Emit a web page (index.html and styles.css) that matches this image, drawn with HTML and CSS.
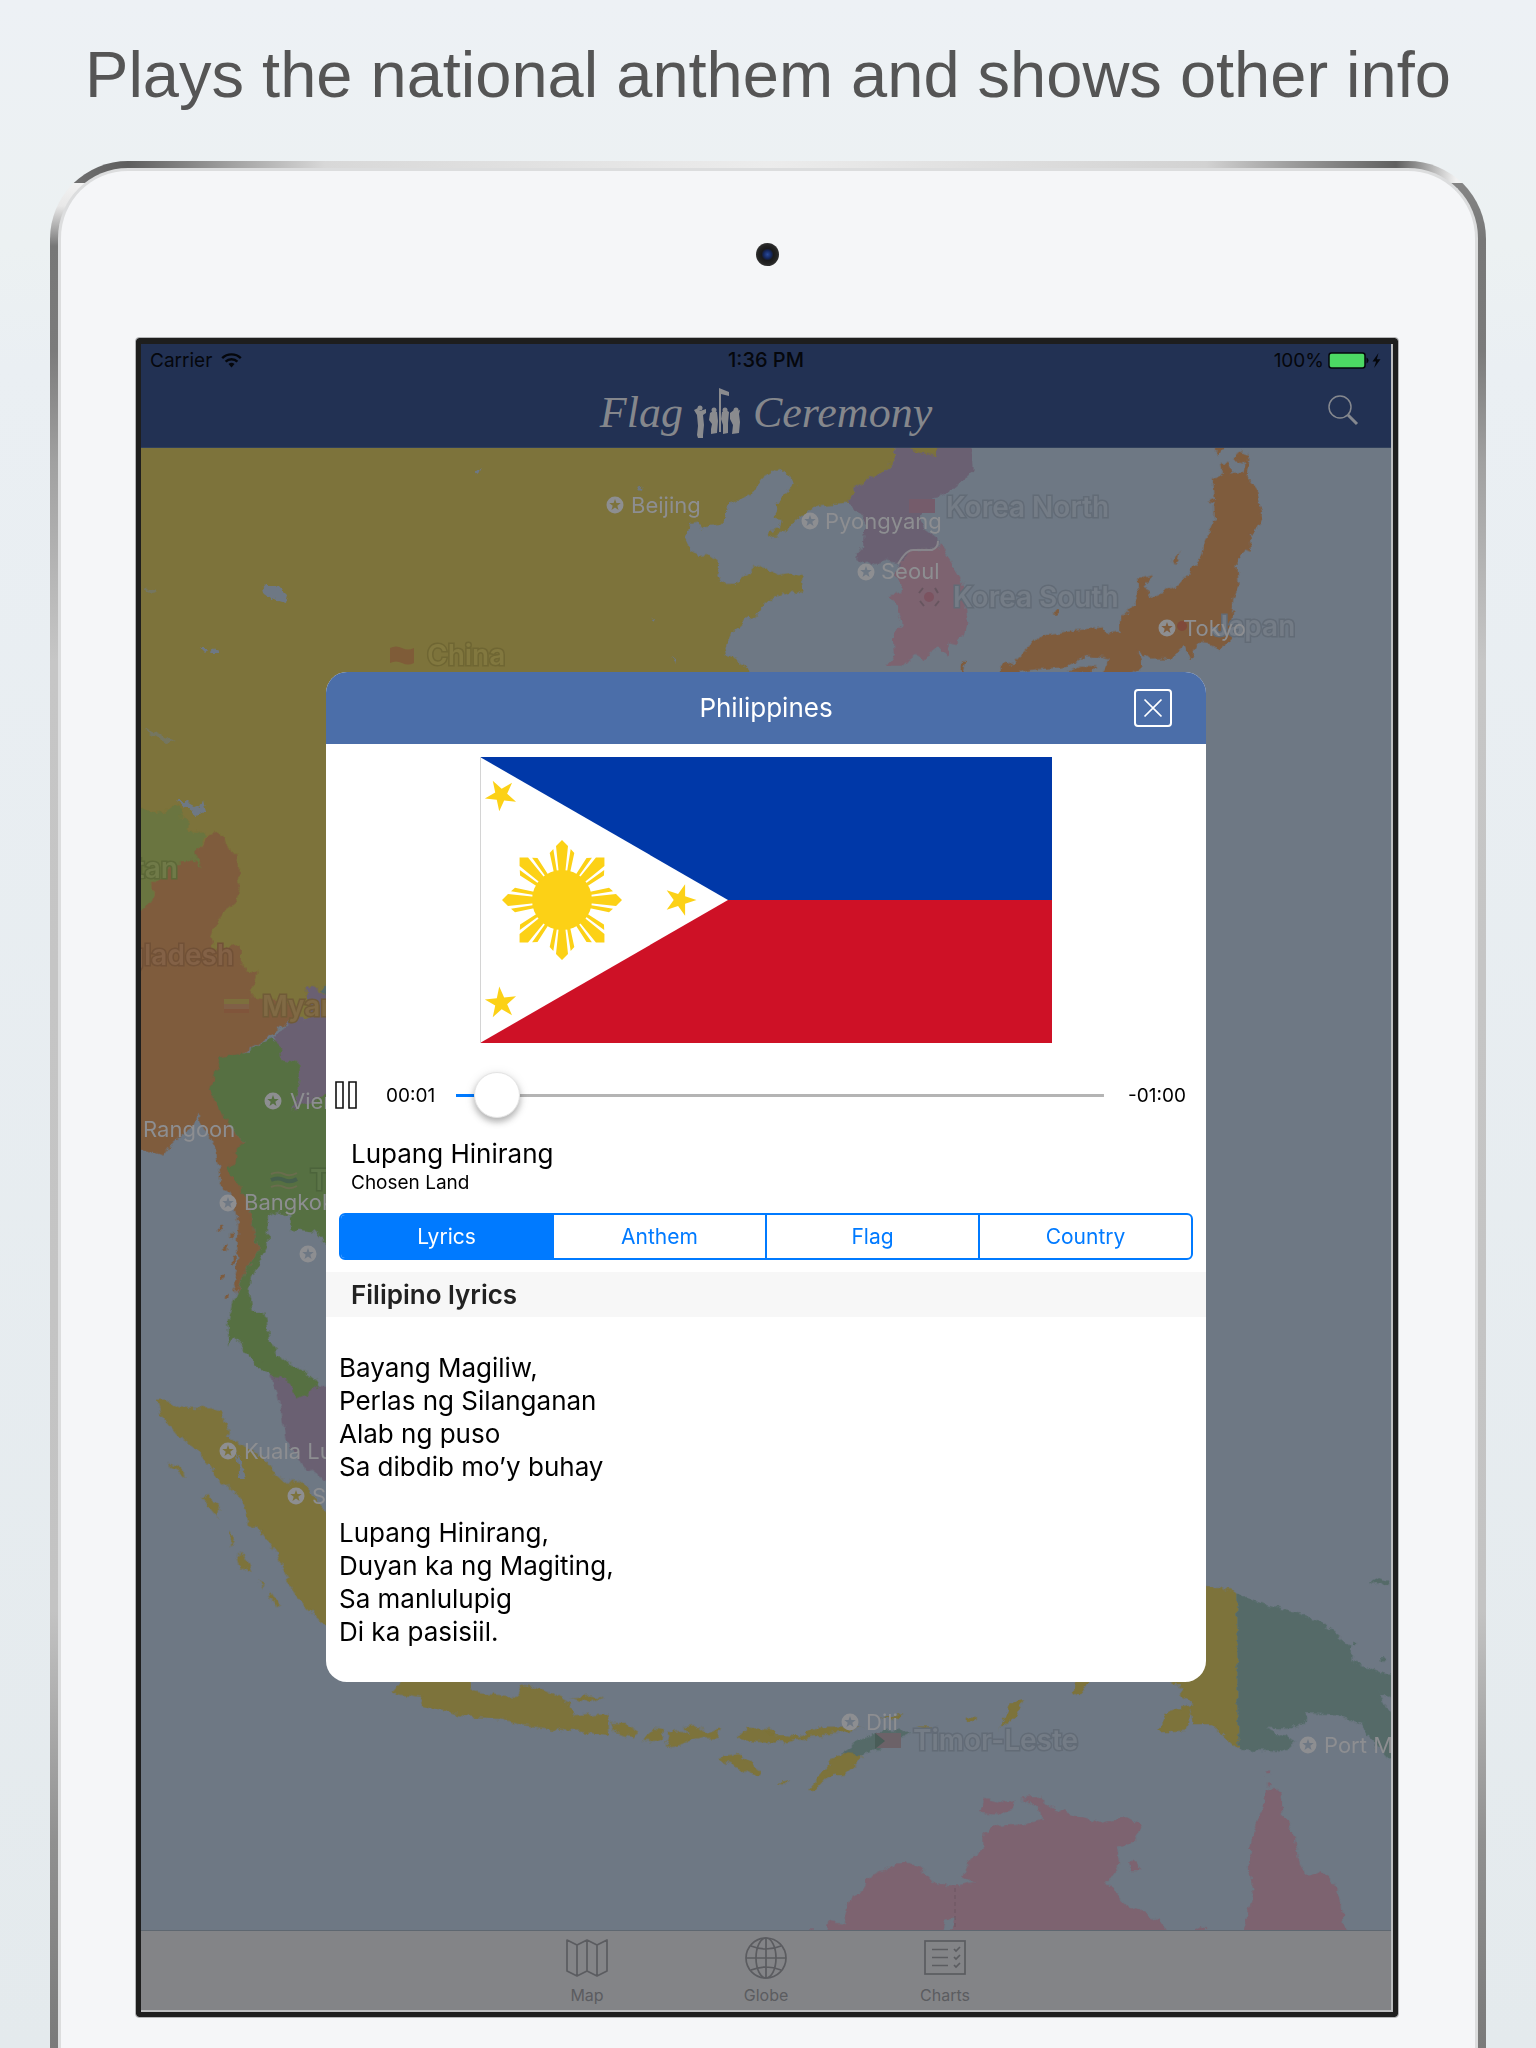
FILE: index.html
```html
<!DOCTYPE html>
<html lang="en">
<head>
<meta charset="utf-8">
<title>Flag Ceremony</title>
<meta name="viewport" content="width=device-width, initial-scale=1">
<link rel="stylesheet" href="styles.css">
</head>
<body>
<h1 class="headline">Plays the national anthem and shows other info</h1>
<div class="device">
  <div class="bezel">
    <div class="camera"></div>
    <div class="screen">
      <header class="topbar">
        <div class="status">
          <div class="status-left">
            <span>Carrier</span>
            <svg width="21" height="15" viewBox="0 0 21 15" aria-hidden="true"><g fill="none" stroke="#05070c" stroke-width="2.4"><path d="M1.2 5.2a13.2 13.2 0 0 1 18.6 0"/><path d="M4.6 8.6a8.4 8.4 0 0 1 11.8 0"/></g><path d="M10.500 14.500l-3-3.400a4.300 4.300 0 0 1 6 0z" fill="#05070c"/></svg>
          </div>
          <time class="clock">1:36 PM</time>
          <div class="status-right">
            <span>100%</span>
            <svg width="54" height="17" viewBox="0 0 54 17" aria-hidden="true"><rect x="1" y="1" width="36" height="15" rx="2.500" fill="#4cd964" stroke="#05070c" stroke-width="1.500"/><path d="M38.500 5.500q2 .8 2 3t-2 3z" fill="#05070c"/><path d="M50.500 1l-6 8.500h3.600l-2 6.500 6.400-8.700h-3.700z" fill="#05070c"/></svg>
          </div>
        </div>
        <div class="navrow">
          <div class="brand">
            <span>Flag</span>
            <svg width="50" height="52" viewBox="0 0 50 52" aria-hidden="true"><g fill="#8a8b8e"><path d="M26 1l10 4v4l-8-2v38h-2z"/><path d="M1 23l4-2 2 3 6-2v4l-3 2 1 10-1 10v3H5l-1-3 1-9-1-11z"/><circle cx="7" cy="21" r="2.500"/><path d="M17 26l3-2 4 1 1 9-1 12-6 1v-5l1-5-3-4z"/><circle cx="21" cy="23" r="2.500"/><path d="M29 25l4-2 3 2-1 11v10l-5 1v-9l-2-6z"/><circle cx="32" cy="23" r="2.500"/><path d="M37 26l4-3 3 1 3-1-1 4 1 8-1 11-7 1 1-9-3-6z"/><circle cx="43" cy="23" r="2.500"/></g></svg>
            <span>Ceremony</span>
          </div>
          <button class="search" type="button" aria-label="Search">
            <svg width="32" height="32" viewBox="0 0 32 32" aria-hidden="true"><circle cx="13" cy="13" r="11" fill="none" stroke="#85888f" stroke-width="1.500"/><path d="M21 21l9 9" stroke="#85888f" stroke-width="3"/></svg>
          </button>
        </div>
      </header>

      <main class="stage">
        <svg class="map" viewBox="141 448 1250 1482" preserveAspectRatio="xMidYMid slice" role="img" aria-label="Map of East and Southeast Asia">
          <defs>
            <filter id="coast" x="0" y="0" width="1" height="1"><feTurbulence type="fractalNoise" baseFrequency=".11" numOctaves="3" seed="4"/><feDisplacementMap in="SourceGraphic" scale="9" xChannelSelector="R" yChannelSelector="G"/></filter>
            <path id="capital" fill-rule="evenodd" d="M0-8.500a8.500 8.500 0 1 1 0 17a8.500 8.500 0 1 1 0-17zM0-6l-1.400 4.100h-4.300l3.400 2.600-1.200 4.200 3.500-2.500 3.500 2.500-1.200-4.200 3.400-2.600h-4.300z"/>
          </defs>
          <g filter="url(#coast)">
            <!-- China -->
            <path fill="#7d733a" d="M100 400H674V1019H100z"/>
            <g transform="translate(670 440) scale(.3333)">
              <path fill="#7d733a" d="M0-100H683V24L672 60 645 92 600 118 560 140 525 188 490 192 450 195 415 215 375 240 350 270 320 285 296 292 300 275 330 268 335 240 310 235 322 212 320 190 345 165 378 130 345 90 320 95 305 92 285 105 262 130 250 158 215 175 180 190 165 215 160 240 145 255 110 258 98 268 85 250 62 255 42 295 58 330 85 348 120 345 142 360 150 380 142 410 155 435 200 435 208 412 235 400 250 382 275 375 300 390 325 408 360 402 402 412 392 430 398 450 375 465 360 455 320 472 280 490 265 528 240 540 230 520 222 545 190 575 180 605 160 620 165 645 200 660 230 680 240 697V800H0z"/>
              <path fill="#6b6072" d="M683-60H905V24L908 95 865 130 830 160 790 175 755 200 750 230 760 260 806 298 800 325 720 332 690 375 650 360 600 375 552 350 580 320 580 290 590 250 570 218 545 205 525 188 560 140 600 118 645 92 672 60 683 24z"/>
              <path fill="#7d733a" d="M720-60H803V24L797 47 770 42 740 36 720 24z"/>
              <path fill="#7d6370" d="M690 375L718 332 800 328 808 305 830 350 850 380 880 430 885 500 893 540 880 590 860 615 835 610 830 640 800 625 760 655 740 645 700 680 650 680 675 640 672 600 695 550 680 500 655 465 700 455 690 430 680 400z"/>
            </g>
            <!-- Japan -->
            <g transform="translate(770 330) scale(.40816 .3333)">
              <path fill="#7f5c3e" d="M1088 320H1112V355L1100 378 1088 360zM1105 395L1125 400 1130 430 1160 425 1165 395 1135 390 1145 368 1175 378 1170 440 1195 480 1208 550 1190 605 1175 620 1178 662 1160 655 1145 690 1148 770 1135 810 1130 880 1140 910 1100 960 1085 940 1050 935 1030 990 1015 950 985 985 925 985 900 960 910 1010 880 1040H810L830 985 780 975 730 1010 640 1020 565 1040 562 1008 600 995 665 915 760 900 815 892 825 910 860 905 860 860 905 800 900 750 935 738 915 765 935 800 1000 765 1055 690 1065 640 1090 570 1088 520 1072 515 1090 505 1085 450 1110 430zM985 690L1003 662 998 688 1006 686 992 708zM465 1030L472 990 482 985 474 1030zM694 846h12v8h-12zM730 1025L760 1010 800 1012 790 1030z"/>
            </g>
            <!-- Mainland Southeast Asia -->
            <g transform="translate(130 680) scale(.3333 .44643)">
              <path fill="#6a7540" d="M-40 285H33L60 300 95 298 135 275 160 292 155 312 175 318 170 335 205 338 228 352 200 390 215 418 190 405 130 412 70 455 70 490 40 520 33 560H-40z"/>
              <path fill="#7f5c3e" d="M-40 530L45 510 72 485 70 455 130 412 190 403 215 418 198 390 228 360 248 333 285 355 300 390 325 390 328 470 318 495 285 515 258 545 245 575 250 605 335 592 335 630 345 650 383 655 362 708 430 715 495 730 505 745 430 790 350 830 300 860 300 1000 340 1035 330 1080 315 1110 355 1165 370 1235 390 1280 350 1320 318 1375 312 1350 320 1320 325 1220 310 1170 270 1120 262 1080 250 1040 200 970 190 1000 130 1035 100 1065 60 1055 30 1050H-40z"/>
              <path fill="#6b6072" d="M530 690L550 690 588 705H640V950H588L500 965 490 955 508 900 505 855 455 850 430 800 470 770 505 745 520 760 545 755 530 720z"/>
              <path fill="#54696b" d="M570 692L600 676V712L588 705z"/>
              <path fill="#577043" d="M270 845L350 835 385 815 420 803 445 815 455 850 505 855 508 900 488 960 588 930H640V1265H588L550 1235 485 1230 480 1200 450 1190 420 1200 415 1260 365 1340 358 1375 365 1415 405 1415 420 1480 450 1520 520 1545 560 1568 620 1640 560 1640 490 1620 430 1560 370 1530 345 1500 310 1470 298 1490 292 1440 305 1400 350 1320 390 1280 370 1235 355 1165 290 1095 318 1080 320 1050 340 1035 300 1000 260 950 240 915 255 890z"/>
              <path fill="#7f5c3e" d="M270 1220h12v12h-12zM295 1240h14v10h-14zM280 1265h12v14h-12zM302 1290h12v16h-12zM272 1330h12v10h-12zM285 1375h14v8h-14z"/>
            </g>
            <!-- Sumatra, Java and the Malay Peninsula -->
            <g transform="translate(130 1360) scale(.40816 .43879)">
              <path fill="#577043" d="M315-10L345 35 380 45 400 60 408 88 440 75 465 60 430 30 385 10 370-10z"/>
              <path fill="#6b6072" d="M345 35L380 45 400 60 408 88 440 75 465 60 520 70V290L480 275 430 245 385 190 375 140 362 80z"/>
              <path fill="#7d733a" d="M65 90L85 90 120 108 200 110 225 120 242 160 235 175 290 200 340 235 355 260 385 285 400 270 440 290 440 300 480 345H540V640L480 605 430 565 390 510 360 440 320 390 292 375 270 310 210 265 175 210 130 185 80 130zM95 235L135 256 135 264 100 245zM175 315L195 310 218 340 215 360zM247 390L257 408 248 425zM262 445L280 442 298 485 270 475zM315 500L330 510 326 520zM340 530L350 532 368 560 360 566zM640 760L680 720H830L840 758 950 768 962 740 985 745 1040 762 1075 780 1085 812 1170 805 1175 855 1080 845 960 832 900 818 830 812 770 800 710 788 715 770zM1080 770L1130 765 1158 770 1120 780zM1178 830L1215 830 1248 848 1230 860 1190 850zM1260 870L1280 838 1308 842 1300 870zM1310 880L1318 848 1355 845 1375 855 1355 835 1385 832 1410 850 1445 840 1440 862 1400 862 1330 882zM1490 860L1510 840 1580 845V872L1520 866zM1438 908L1490 898 1545 935 1530 948 1500 935z"/>
            </g>
            <!-- Timor, New Guinea and Australia -->
            <g transform="translate(770 1360) scale(.48852 .43879)">
              <path fill="#7d733a" d="M-10 852L60 858 100 838 190 838 150 850 100 855 30 872-10 868zM78 980L105 945 130 905 185 880 185 910 150 945 115 950 90 980zM225 815L270 805 265 818zM300 835L340 835 320 842zM405 815h14v10h-14zM470 838L490 785 520 775 505 810zM622 755L630 720H660L635 762zM795 846L815 800 855 790 862 805 850 845zM15 965L40 958 30 968zM860 515H891L920 518 957 532V885L905 830 865 830 862 800 845 790 870 785 840 765 850 750 820 734V515z"/>
              <path fill="#546b68" d="M145 895L190 860 240 845 295 845 260 865 190 900zM957 532L1020 560 1085 578 1130 600 1165 630 1190 655 1188 685 1250 712 1320 730V935L1270 912 1230 865 1210 830 1160 808 1100 805 1090 830 1060 840 1015 838 1075 870 1060 885 1035 893 957 885zM1228 505L1245 495 1267 501 1262 512 1240 514zM1192 638h10v12h-10zM1250 675h10v10h-10z"/>
              <path fill="#6e7884" d="M1246 758L1320 790V830L1262 795z"/>
              <path fill="#7d6370" d="M75 1300L115 1300 120 1280 150 1285 165 1220 190 1210 200 1180 240 1160 275 1142 310 1160 340 1195 380 1200 420 1192 395 1175 415 1130 435 1110 435 1085 460 1060 530 1055 555 1045 550 1020 515 1000 550 995 575 1020 620 1035 680 1055 730 1042 762 1060 740 1100 710 1110 715 1150 688 1195 730 1240 770 1260 818 1300 850 1330H75zM430 1030L440 1000 480 1010 500 1005 495 1025 470 1035zM735 1145L750 1142 762 1165 738 1165zM870 1300L885 1290 895 1296 890 1330zM970 1300L990 1210 982 1150 990 1070 1010 1020 1015 985 1030 975 1045 990 1050 1040 1075 1090 1085 1150 1100 1180 1130 1165 1160 1200 1178 1300V1340H965zM1012 938h10v8h-10zM1015 965h8v8h-8z"/>
              <path fill="#6e7884" d="M355 1300L360 1275 378 1268 372 1300z"/>
            </g>
            <!-- Lakes -->
            <path fill="#6e7884" d="M261 592L268 584 276 584 287 595 285 603 271 599zM475 472L481 467 478 474zM200 648L209 648 205 653zM212 653L216 646 220 653zM636 489L643 487 638 491zM650 619L654 618 652 622zM673 656L678 660 677 664zM177 800L186 800 200 808 203 799 206 811 196 814zM235 1450L246 1478 240 1478z"/>
            <path fill="#747661" d="M142 589L151 588 158 592 152 593zM144 729L160 735 176 741 166 743 150 734z"/>
          </g>
          <path d="M898 564Q906 550 913 550H932Q938 548 938 541" fill="none" stroke="#87858b" stroke-width="2"/>
          <path d="M955 1888V1930" stroke="#6d5661" stroke-dasharray="4 3"/>
          <g class="map-flags">
            <path fill="#7f5c38" d="M390 648q6-3 12 0t12 0v15q-6 3-12 0t-12 0z"/>
            <path fill="#755c6b" d="M909 499h26v14h-26z"/>
            <circle cx="929" cy="597" r="5" fill="#7c5360"/>
            <path d="M919 593l4-5M920 601l4 5M935 588l3 5M935 606l4-5" stroke="#67555f" stroke-width="2"/>
            <circle cx="1182" cy="626" r="5" fill="#80493a"/>
            <path fill="#7d6f3d" d="M224 999h25v5h-25z"/><path fill="#806047" d="M224 1004h25v5h-25z"/><path fill="#80553b" d="M224 1009h25v4h-25z"/>
            <path d="M271 1174q7-3 13 0t13-1M271 1187q7-3 13 0t13-1" fill="none" stroke="#6a6d4e" stroke-width="2"/><path d="M271 1180q7-3 13 0t13-1" fill="none" stroke="#46604c" stroke-width="4"/>
            <path fill="#6c6268" d="M875 1733h26v15h-26z"/><path fill="#495d58" d="M875 1733l10 8-10 8z"/>
          </g>
          <g class="country-labels">
            <text class="on-china" x="427" y="665">China</text>
            <text x="946" y="517">Korea North</text>
            <text x="953" y="607">Korea South</text>
            <text x="1212" y="636">Japan</text>
            <text x="913" y="1750">Timor-Leste</text>
            <text class="on-bhutan" x="178" y="878" text-anchor="end">Bhutan</text>
            <text class="on-myanmar" x="234" y="965" text-anchor="end">Bangladesh</text>
            <text class="on-border" x="262" y="1016">Myanmar</text>
            <text class="on-thailand" x="310" y="1190">Thailand</text>
          </g>
          <g class="city-labels">
            <use href="#capital" x="615" y="505"/><text x="631" y="513">Beijing</text>
            <use href="#capital" x="810" y="521"/><text x="825" y="529">Pyongyang</text>
            <use href="#capital" x="866" y="572"/><text x="881" y="579">Seoul</text>
            <use href="#capital" x="1167" y="628"/><text x="1183" y="636">Tokyo</text>
            <text x="143" y="1137">Rangoon</text>
            <use href="#capital" x="273" y="1101"/><text x="290" y="1109">Vientiane</text>
            <use href="#capital" x="228" y="1203"/><text x="244" y="1210">Bangkok</text>
            <use href="#capital" x="308" y="1254"/>
            <use href="#capital" x="228" y="1451"/><text x="244" y="1459">Kuala Lumpur</text>
            <use href="#capital" x="296" y="1496"/><text x="312" y="1504">Singapore</text>
            <use href="#capital" x="850" y="1722"/><text x="866" y="1730">Dili</text>
            <use href="#capital" x="1308" y="1745"/><text x="1324" y="1753">Port Moresby</text>
          </g>
        </svg>
      </main>

      <nav class="tabbar" aria-label="Sections">
        <a class="tab" href="#map">
          <svg width="42" height="42" viewBox="0 0 42 42" aria-hidden="true"><path fill="none" stroke="#5b5c60" stroke-width="1.700" stroke-linejoin="round" d="M1 3l10 5 10-5 10 5 10-5v31l-10 5-10-5-10 5-10-5zM11 8v31M21 3v31M31 8v31"/></svg>
          Map
        </a>
        <a class="tab" href="#globe">
          <svg width="42" height="42" viewBox="0 0 42 42" aria-hidden="true"><g fill="none" stroke="#5b5c60" stroke-width="1.700"><circle cx="21" cy="21" r="20"/><ellipse cx="21" cy="21" rx="10" ry="20"/><path d="M21 1v40M1 21h40M6 9q15 6 30 0M6 33q15-6 30 0"/></g></svg>
          Globe
        </a>
        <a class="tab" href="#charts">
          <svg width="42" height="42" viewBox="0 0 42 42" aria-hidden="true"><g fill="none" stroke="#5b5c60" stroke-width="1.700"><rect x="1" y="4" width="40" height="33"/><path d="M8 12.500h16M8 20.500h16M8 28.500h16M30 12l2 2 4-4M30 20l2 2 4-4M30 28l2 2 4-4"/></g></svg>
          Charts
        </a>
      </nav>

      <section class="modal" role="dialog" aria-labelledby="country-name">
        <header class="modal-head">
          <h2 id="country-name">Philippines</h2>
          <button class="close" type="button" aria-label="Close">
            <svg width="20" height="20" viewBox="0 0 20 20" aria-hidden="true"><path d="M1.500 1.500l17 17M18.500 1.500l-17 17" stroke="#fff" stroke-width="1.700"/></svg>
          </button>
        </header>
        <svg class="flag" viewBox="0 0 572 286" role="img" aria-label="Flag of the Philippines">
          <defs>
            <path id="star" d="M0-16.500L3.700-5.100 15.700-5.100 6 1.900 9.700 13.300 0 6.300-9.700 13.300-6 1.900-15.700-5.100-3.700-5.100z"/>
            <path id="ray" d="M-3.300-28L-6-54 0-60 6-54 3.300-28zM5-28L8.700-51 12.300-47 8-27zM-5-28L-8.700-51-12.300-47-8-27z"/>
          </defs>
          <path fill="#0038a8" d="M0 0h572v143H0z"/>
          <path fill="#ce1126" d="M0 143h572v143H0z"/>
          <path fill="#fff" d="M0 0l248 143L0 286z"/>
          <path d="M.5 0v286" stroke="#d4d4d4"/>
          <g fill="#fcd116">
            <g transform="translate(82 143)">
              <circle r="30"/>
              <use href="#ray"/><use href="#ray" transform="rotate(45)"/><use href="#ray" transform="rotate(90)"/><use href="#ray" transform="rotate(135)"/><use href="#ray" transform="rotate(180)"/><use href="#ray" transform="rotate(225)"/><use href="#ray" transform="rotate(270)"/><use href="#ray" transform="rotate(315)"/>
            </g>
            <use href="#star" transform="translate(21 38) rotate(-30)"/>
            <use href="#star" transform="translate(21 246) rotate(-6)"/>
            <use href="#star" transform="translate(200 143) rotate(90)"/>
          </g>
        </svg>
        <div class="player">
          <button class="pause" type="button" aria-label="Pause">
            <svg width="22" height="28" viewBox="0 0 22 28" aria-hidden="true"><path fill="none" stroke="#111" stroke-width="1.600" d="M1 1h7v26H1zM14 1h7v26h-7z"/></svg>
          </button>
          <span class="elapsed">00:01</span>
          <input class="scrubber" type="range" min="0" max="100" value="3" aria-label="Playback position">
          <span class="remaining">-01:00</span>
        </div>
        <div class="song">
          <p class="song-title">Lupang Hinirang</p>
          <p class="song-sub">Chosen Land</p>
        </div>
        <div class="segments">
          <button class="segment is-active" type="button">Lyrics</button>
          <button class="segment" type="button">Anthem</button>
          <button class="segment" type="button">Flag</button>
          <button class="segment" type="button">Country</button>
        </div>
        <h3 class="section-title">Filipino lyrics</h3>
        <div class="lyrics">
          <p>Bayang Magiliw,<br>Perlas ng Silanganan<br>Alab ng puso<br>Sa dibdib mo’y buhay</p>
          <p>Lupang Hinirang,<br>Duyan ka ng Magiting,<br>Sa manlulupig<br>Di ka pasisiil.</p>
        </div>
      </section>
    </div>
  </div>
</div>
</body>
</html>
```
FILE: styles.css
```css
* { box-sizing: border-box; }

body {
  margin: 0;
  min-height: 100vh;
  display: flex;
  flex-direction: column;
  background: linear-gradient(#edf1f5, #ecf1f2 12%, #eaeff3 18%, #e4eaed);
  font-family: Inter, "Liberation Sans", sans-serif;
  color: #000;
}

h1, h2, h3, p { margin: 0; font-weight: 400; }

button {
  margin: 0;
  padding: 0;
  border: 0;
  background: none;
  font: inherit;
  color: inherit;
}

svg { display: block; flex: none; }

.headline {
  padding: 35px 20px 46px;
  font: 65px/80px "Liberation Sans", Arial, sans-serif;
  color: #555;
  text-align: center;
}

/* Tablet shell */
.device {
  flex: 1;
  display: flex;
  margin: 0 50px;
  padding: 7px 8px 0;
  border-radius: 78px 78px 0 0;
  background:
    linear-gradient(90deg, #777 0, #5e5e5e 78px, #a0a0a0 180px, #d8d8d8 275px, #ececec 50%, #d2d2d2 calc(100% - 280px), #a0a0a0 calc(100% - 200px), #606060 calc(100% - 90px), #888 calc(100% - 72px), #f2f2f2 calc(100% - 30px)) top / 100% 22px no-repeat,
    linear-gradient(#f2f2f2 22px, #e8e8e8 45px, #777 85px, #7b7b7b 190px, #a0a0a0 300px, #c6c6c6 500px, #c3c3c3 1450px, #909090 1680px, #7a7a7a) left / 50% 100% no-repeat,
    linear-gradient(#858585 22px, #777 80px, #7b7b7b 190px, #a0a0a0 300px, #c6c6c6 500px, #c3c3c3 1450px, #909090 1680px, #7a7a7a) right / 50% 100% no-repeat;
}

.bezel {
  flex: 1;
  display: flex;
  flex-direction: column;
  align-items: center;
  padding: 72px 77px 31px 75px;
  border: 3px solid #dcddde;
  border-bottom: 0;
  border-radius: 70px 70px 0 0;
  background: #f5f6f8;
}

.camera {
  width: 23px;
  height: 23px;
  border-radius: 50%;
  background: radial-gradient(circle, #2a4a9a 0, #14265c 4px, #1a1a1c 6px, #222 9px, #4a4a4c);
}

.screen {
  position: relative;
  flex: 1;
  align-self: stretch;
  display: flex;
  flex-direction: column;
  margin-top: 72px;
  padding: 0 2px 2px 0;
  border: 5px solid #1e1e1e;
  border-top-width: 6px;
  border-radius: 3px;
  outline: 1px solid #b4b5b7;
  background: #bcbdbf;
}

/* Status and navigation bars */
.topbar {
  height: 104px;
  background: #223153;
  border-bottom: 1px solid #30405c;
}

.status {
  display: grid;
  grid-template-columns: 1fr auto 1fr;
  align-items: center;
  height: 32px;
  padding: 0 9px;
  font-size: 19px;
  color: #05070c;
}

.status-left, .status-right { display: flex; align-items: center; gap: 9px; }
.status-right { justify-content: flex-end; gap: 4px; }
.clock { font-size: 20px; font-weight: 500; }

.navrow {
  display: grid;
  grid-template-columns: 1fr auto 1fr;
  align-items: center;
  height: 68px;
  padding: 0 32px;
}

.brand {
  grid-column: 2;
  display: flex;
  align-items: center;
  gap: 10px;
  padding-top: 6px;
  font: italic 44px/52px "Liberation Serif", "Times New Roman", serif;
  color: #85878c;
}

.search { justify-self: end; }

/* Map */
.stage { flex: 1; position: relative; min-height: 1200px; }

.map {
  position: absolute;
  inset: 0;
  width: 100%;
  height: 100%;
  background: #6e7884;
}

.city-labels { fill: #8d8e91; font-size: 22px; }

.country-labels {
  fill: #747c86;
  stroke: #626b76;
  stroke-width: 3px;
  paint-order: stroke;
  font-size: 28px;
  font-weight: 600;
}

.on-china { fill: #82783f; stroke: #6f6633; }
.on-bhutan { fill: #707a48; stroke: #5d6838; }
.on-myanmar { fill: #836146; stroke: #715137; }
.on-border { fill: #806a44; stroke: #705b38; }
.on-thailand { fill: #5c7548; stroke: #4c643b; }

/* Tab bar */
.tabbar {
  display: flex;
  justify-content: center;
  height: 80px;
  padding-top: 6px;
  border-top: 1px solid #5e6770;
  background: #838487;
}

.tab {
  width: 179px;
  display: flex;
  flex-direction: column;
  align-items: center;
  gap: 6px;
  font-size: 16px;
  line-height: 20px;
  color: #5b5c60;
  text-decoration: none;
}

/* Anthem dialog */
.modal {
  position: absolute;
  inset: 0 2px 2px 0;
  margin: auto;
  width: 880px;
  max-width: 94%;
  height: fit-content;
  border-radius: 21px;
  overflow: hidden;
  background: #fff;
}

.modal-head {
  display: grid;
  grid-template-columns: 1fr auto 1fr;
  align-items: center;
  height: 72px;
  padding: 0 34px;
  background: #4b6ea9;
  color: #fff;
}

.modal-head h2 { grid-column: 2; font-size: 26px; line-height: 34px; }

.close {
  justify-self: end;
  display: grid;
  place-items: center;
  width: 38px;
  height: 38px;
  border: 2px solid #fff;
  border-radius: 4px;
}

.flag { width: 65%; margin: 13px auto 0; }

.player {
  display: flex;
  align-items: center;
  height: 60px;
  margin-top: 22px;
  padding: 0 20px 0 9px;
  font-size: 19px;
}

.elapsed { margin: 0 21px 0 29px; }
.remaining { margin-left: 24px; }

.scrubber {
  appearance: none;
  flex: 1;
  min-width: 0;
  height: 46px;
  margin: 0;
  background: linear-gradient(90deg, #007aff 40px, #b4b4b4 40px) center / 100% 3px no-repeat;
}

.scrubber::-webkit-slider-thumb {
  appearance: none;
  width: 46px;
  height: 46px;
  border: 1px solid #e4e4e4;
  border-radius: 50%;
  background: #fff;
  box-shadow: 0 4px 6px rgba(0, 0, 0, .25), 0 2px 12px rgba(0, 0, 0, .1);
}

.song { padding: 12px 25px 18px; }
.song-title { font-size: 26px; line-height: 34px; }
.song-sub { font-size: 19px; line-height: 24px; }

.segments {
  display: flex;
  height: 47px;
  margin: 0 13px;
  border: 2px solid #007aff;
  border-radius: 6px;
  overflow: hidden;
}

.segment {
  flex: 1;
  font-size: 21px;
  color: #007aff;
}

.segment + .segment { border-left: 2px solid #007aff; }
.segment.is-active { background: #007aff; color: #fff; }

.section-title {
  margin-top: 12px;
  padding: 0 25px;
  background: #f7f7f7;
  font-size: 26px;
  font-weight: 600;
  line-height: 45px;
  color: #222;
}

.lyrics {
  padding: 34px 13px;
  font-size: 26px;
  line-height: 33px;
}

.lyrics p + p { margin-top: 33px; }
```
